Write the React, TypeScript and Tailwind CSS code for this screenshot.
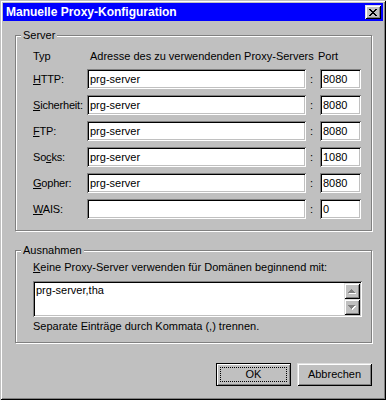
import React from "react";

const sunken =
  "bg-white shadow-[inset_1px_1px_#808080,inset_-1px_-1px_#fff,inset_2px_2px_#000,inset_-2px_-2px_#c0c0c0]";
const raised =
  "bg-[#c0c0c0] shadow-[inset_1px_1px_#dfdfdf,inset_-1px_-1px_#000,inset_2px_2px_#fff,inset_-2px_-2px_#808080]";

const rows: { label: React.ReactNode; host: string; port: string }[] = [
  { label: <><u>H</u>TTP:</>, host: "prg-server", port: "8080" },
  { label: <><u>S</u>icherheit:</>, host: "prg-server", port: "8080" },
  { label: <><u>F</u>TP:</>, host: "prg-server", port: "8080" },
  { label: <>So<u>c</u>ks:</>, host: "prg-server", port: "1080" },
  { label: <><u>G</u>opher:</>, host: "prg-server", port: "8080" },
  { label: <><u>W</u>AIS:</>, host: "", port: "0" },
];

const CloseGlyph = () => (
  <svg width="8" height="7" viewBox="0 0 8 7" shapeRendering="crispEdges">
    <path
      fill="#000"
      d="M0 0h2v1H0zM6 0h2v1H6zM1 1h2v1H1zM5 1h2v1H5zM2 2h4v1H2zM3 3h2v1H3zM2 4h4v1H2zM1 5h2v1H1zM5 5h2v1H5zM0 6h2v1H0zM6 6h2v1H6z"
    />
  </svg>
);

const Arrow = ( { down }: { down?: boolean } ) => (
  <svg width="8" height="5" viewBox="0 0 8 5" shapeRendering="crispEdges">
    { down ? (
      <>
        <path fill="#fff" d="M1 1h7v1H1zM2 2h5v1H2zM3 3h3v1H3zM4 4h1v1H4z" />
        <path fill="#808080" d="M0 0h7v1H0zM1 1h5v1H1zM2 2h3v1H2zM3 3h1v1H3z" />
      </>
    ) : (
      <>
        <path fill="#fff" d="M4 1h1v1H4zM3 2h3v1H3zM2 3h5v1H2zM1 4h7v1H1z" />
        <path fill="#808080" d="M3 0h1v1H3zM2 1h3v1H2zM1 2h5v1H1zM0 3h7v1H0z" />
      </>
    ) }
  </svg>
);

const Group = ( { title, className, children }: { title: string; className: string; children: React.ReactNode } ) => (
  <div className={ `relative w-[357px] border border-[#808080] shadow-[inset_1px_1px_#fff,1px_1px_#fff] ${ className }` }>
    <span className="absolute left-[5px] top-[-7px] bg-[#c0c0c0] px-[2px] leading-[13px]">{ title }</span>
    { children }
  </div>
);

export default function App() {
  return (
    <div className="w-[386px] h-[400px] bg-[#c0c0c0] p-[3px] flex flex-col text-[11px] leading-[13px] text-black font-['Liberation_Sans',Arial,sans-serif] shadow-[inset_1px_1px_#c0c0c0,inset_-1px_-1px_#000,inset_2px_2px_#fff,inset_-2px_-2px_#808080]">
      <div className="h-[18px] bg-[#0000ff] flex items-center justify-between pl-[3px] pr-[2px]">
        <span className="text-white font-bold text-[12px] leading-[14px]">Manuelle Proxy-Konfiguration</span>
        <button className={ `w-[16px] h-[14px] flex items-center justify-center ${ raised }` }>
          <CloseGlyph />
        </button>
      </div>

      <div className="px-[12px] flex flex-col">
        <Group title="Server" className="mt-[14px] h-[196px] pl-[17px] pt-[14px]">
          <div className="flex h-[13px]">
            <span className="w-[57px]">Typ</span>
            <span className="w-[228px]">Adresse des zu verwendenden Proxy-Servers</span>
            <span>Port</span>
          </div>
          <div className="mt-[6px] flex flex-col gap-[6px]">
            { rows.map( ( row, i ) => (
              <div key={ i } className="flex items-center h-[20px]">
                <span className="w-[54px] tracking-[-0.2px]">{ row.label }</span>
                <div className={ `w-[219px] h-[20px] pl-[3px] flex items-center ${ sunken }` }>{ row.host }</div>
                <span className="w-[14px] pl-[4px]">:</span>
                <div className={ `w-[41px] h-[20px] pl-[3px] flex items-center ${ sunken }` }>{ row.port }</div>
              </div>
            ) ) }
          </div>
        </Group>

        <Group title="Ausnahmen" className="mt-[19px] h-[93px] pl-[17px] pt-[10px]">
          <div>
            <u>K</u>eine Proxy-Server verwenden für Domänen beginnend mit:
          </div>
          <div className={ `mt-[7px] w-[329px] h-[36px] p-[2px] flex ${ sunken }` }>
            <div className="flex-1 pl-[1px] pt-[1px]">prg-server,tha</div>
            <div className="w-[16px] flex flex-col">
              <div className={ `h-[16px] flex items-center justify-center ${ raised }` }><Arrow /></div>
              <div className={ `h-[16px] flex items-center justify-center ${ raised }` }><Arrow down /></div>
            </div>
          </div>
          <div className="mt-[3px]">Separate Einträge durch Kommata (,) trennen.</div>
        </Group>

        <div className="mt-[20px] w-[357px] flex justify-end gap-[6px]">
          <button className="relative w-[75px] h-[23px] bg-[#c0c0c0] border border-black shadow-[inset_1px_1px_#fff,inset_-1px_-1px_#808080]">
            OK
            <span className="absolute inset-[3px] border border-dotted border-black" />
          </button>
          <button className={ `w-[75px] h-[23px] ${ raised }` }>Abbrechen</button>
        </div>
      </div>
    </div>
  );
}
